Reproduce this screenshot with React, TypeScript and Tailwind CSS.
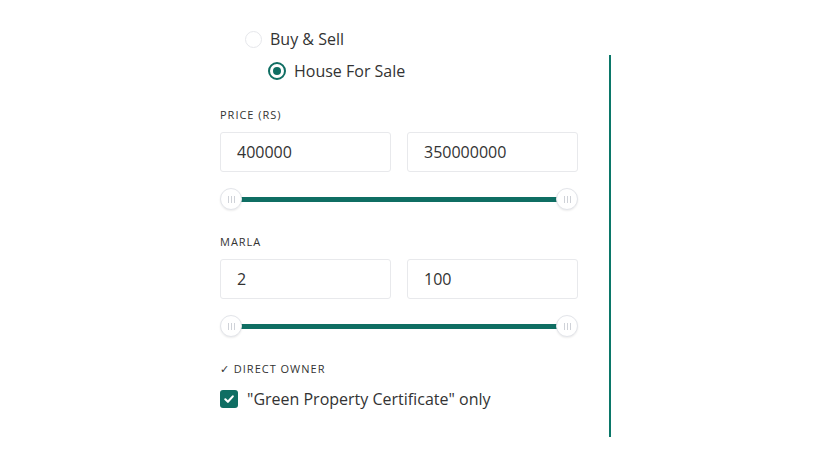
import React from "react";

const TEAL = "#0f6e63";

function Thumb() {
  return (
    <div className="relative z-10 flex h-[22px] w-[22px] items-center justify-center gap-[2px] rounded-full border border-[#e3e5ea] bg-white shadow-[0_1px_2px_rgba(0,0,0,0.08)]">
      <span className="h-[7px] w-px bg-[#cfd2d8]" />
      <span className="h-[7px] w-px bg-[#cfd2d8]" />
      <span className="h-[7px] w-px bg-[#cfd2d8]" />
    </div>
  );
}

function RangeSlider() {
  return (
    <div className="relative flex h-[22px] w-[358px] items-center justify-between">
      <div className="absolute left-[11px] right-[11px] top-[9px] h-[5px] bg-[#0f6e63]" />
      <Thumb />
      <Thumb />
    </div>
  );
}

function RangeInputs({ min, max }: { min: string; max: string }) {
  return (
    <div className="grid w-[358px] grid-cols-2 gap-4">
      {[min, max].map((v, i) => (
        <div
          key={i}
          className="flex h-[40px] items-center rounded-[3px] border border-[#e8e9ec] bg-white pl-4 text-[16px] text-[#333]"
        >
          {v}
        </div>
      ))}
    </div>
  );
}

function FieldLabel({ children }: { children: React.ReactNode }) {
  return (
    <div className="h-[14px] text-[11px] leading-[14px] tracking-[0.09em] text-[#333]">
      {children}
    </div>
  );
}

export default function App() {
  return (
    <div
      className="min-h-[457px] bg-white pl-[220px] pt-[29px] text-[#333]"
      style={{ fontFamily: '"Open Sans", "Liberation Sans", sans-serif' }}
    >
      <div className="w-[391px]">
        {/* Radio list */}
        <div className="mb-[6px] flex h-[20px] items-center pl-[25px] text-[16px]">
          <span className="mr-[8px] h-[17px] w-[17px] rounded-full border border-[#e6e7eb] bg-white" />
          Buy &amp; Sell
        </div>

        <div className="border-r-2 border-[#0b7769] pb-[29px] pt-[6px]">
          <div className="flex h-[20px] items-center pl-[48px] text-[16px]">
            <span
              className="mr-[8px] flex h-[18px] w-[18px] items-center justify-center rounded-full border-2 bg-white"
              style={{ borderColor: TEAL }}
            >
              <span className="h-[8px] w-[8px] rounded-full bg-[#0f6e63]" />
            </span>
            House For Sale
          </div>

          <div className="mt-[27px]">
            <FieldLabel>PRICE (RS)</FieldLabel>
          </div>
          <div className="mt-[10px]">
            <RangeInputs min="400000" max="350000000" />
          </div>
          <div className="mt-[16px]">
            <RangeSlider />
          </div>

          <div className="mt-[25px]">
            <FieldLabel>MARLA</FieldLabel>
          </div>
          <div className="mt-[10px]">
            <RangeInputs min="2" max="100" />
          </div>
          <div className="mt-[16px]">
            <RangeSlider />
          </div>

          <div className="mt-[25px]">
            <FieldLabel>✓ DIRECT OWNER</FieldLabel>
          </div>
          <div className="mt-[14px] flex h-[18px] items-center text-[16px]">
            <span className="mr-[9px] flex h-[18px] w-[18px] items-center justify-center rounded-[3px] bg-[#0f6e63]">
              <svg viewBox="0 0 12 12" className="h-[12px] w-[12px]">
                <path
                  d="M2.3 6.3 L4.9 8.8 L9.8 3.4"
                  fill="none"
                  stroke="white"
                  strokeWidth="2.1"
                  strokeLinecap="round"
                  strokeLinejoin="round"
                />
              </svg>
            </span>
            "Green Property Certificate" only
          </div>
        </div>
      </div>
    </div>
  );
}
